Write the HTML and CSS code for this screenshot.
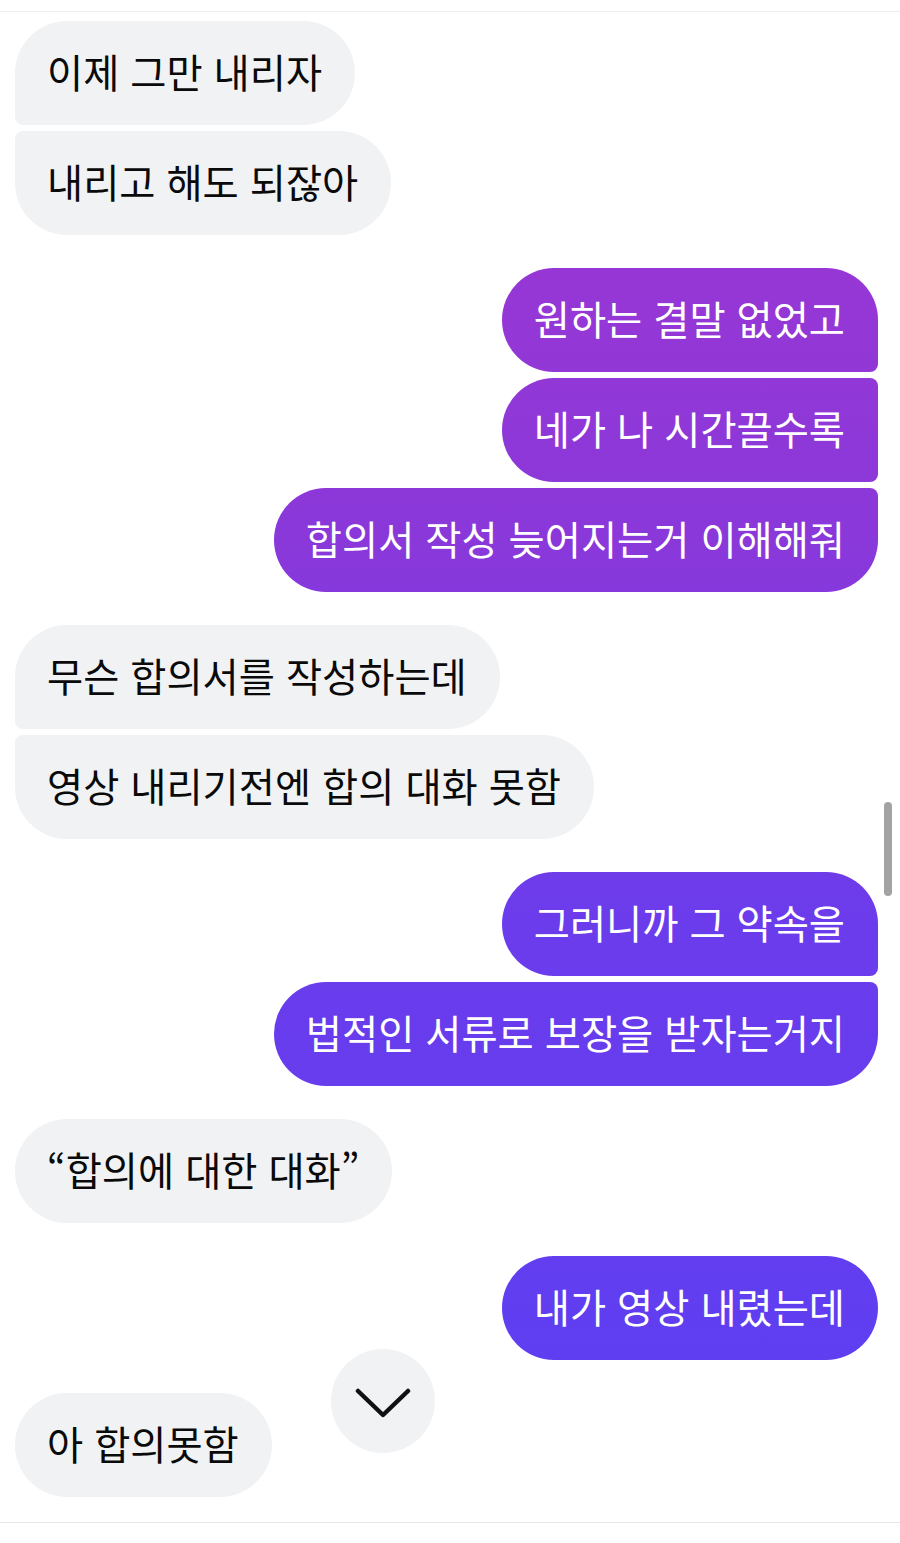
FILE: index.html
```html
<!DOCTYPE html>
<html lang="ko">
<head>
<meta charset="utf-8">
<link rel="stylesheet" href="styles.css">
</head>
<body>
<div class="screen">
  <div class="topbar"></div>
  <div class="thread">
    <div class="group in">
      <div class="bubble first">이제 그만 내리자</div>
      <div class="bubble last">내리고 해도 되잖아</div>
    </div>
    <div class="group out">
      <div class="bubble first">원하는 결말 없었고</div>
      <div class="bubble mid">네가 나 시간끌수록</div>
      <div class="bubble last">합의서 작성 늦어지는거 이해해줘</div>
    </div>
    <div class="group in">
      <div class="bubble first">무슨 합의서를 작성하는데</div>
      <div class="bubble last">영상 내리기전엔 합의 대화 못함</div>
    </div>
    <div class="group out">
      <div class="bubble first">그러니까 그 약속을</div>
      <div class="bubble last">법적인 서류로 보장을 받자는거지</div>
    </div>
    <div class="group in">
      <div class="bubble">“합의에 대한 대화”</div>
    </div>
    <div class="group out">
      <div class="bubble">내가 영상 내렸는데</div>
    </div>
    <div class="group in">
      <div class="bubble">아 합의못함</div>
    </div>
  </div>
  <div class="bottombar"></div>
  <button class="jump" aria-label="아래로">
    <svg width="56" height="32" viewBox="0 0 56 32"><path d="M3 4 L28 28 L53 4" fill="none" stroke="#111" stroke-width="4.5" stroke-linecap="round" stroke-linejoin="round"/></svg>
  </button>
  <div class="scrollbar"></div>
</div>
</body>
</html>
```
FILE: styles.css
```css
html, body {
  margin: 0;
  padding: 0;
  background: #ffffff;
}
.screen {
  position: relative;
  width: 900px;
  height: 1543px;
  overflow: hidden;
  font-family: "Noto Sans CJK KR", "Noto Sans", sans-serif;
}
.topbar {
  height: 11px;
  border-bottom: 1px solid #ededef;
}
.thread {
  display: flex;
  flex-direction: column;
  gap: 33px;
  padding: 9px 22px 0 15px;
  height: 1510px;
  box-sizing: border-box;
}
.group {
  display: flex;
  flex-direction: column;
  gap: 6px;
}
.group.in { align-items: flex-start; }
.group.out { align-items: flex-end; }
.bubble {
  height: 104px;
  box-sizing: border-box;
  padding: 0 33px 4px 32px;
  display: flex;
  align-items: center;
  font-size: 39.3px;
  line-height: 46px;
  border-radius: 52px;
  white-space: nowrap;
}
.in .bubble {
  background: #f1f2f4;
  color: #0a0a0a;
}
.out .bubble {
  color: #ffffff;
  background: linear-gradient(180deg, #a236d0 0%, #8a38da 35%, #6b3cec 60%, #5a3ff3 100%);
  background-attachment: fixed;
}
.in .first { border-bottom-left-radius: 8px; }
.in .mid { border-top-left-radius: 8px; border-bottom-left-radius: 8px; }
.in .last { border-top-left-radius: 8px; }
.out .first { border-bottom-right-radius: 8px; }
.out .mid { border-top-right-radius: 8px; border-bottom-right-radius: 8px; }
.out .last { border-top-right-radius: 8px; }
.bottombar {
  border-top: 1px solid #e6e6e8;
}
.jump {
  position: absolute;
  left: 331px;
  top: 1349px;
  width: 104px;
  height: 104px;
  border: none;
  border-radius: 50%;
  background: #f1f2f4;
  display: flex;
  align-items: center;
  justify-content: center;
  padding: 0;
}
.jump svg { margin-top: 4px; }
.scrollbar {
  position: absolute;
  left: 884px;
  top: 802px;
  width: 8px;
  height: 94px;
  border-radius: 4px;
  background: #a3a3a3;
}
```
